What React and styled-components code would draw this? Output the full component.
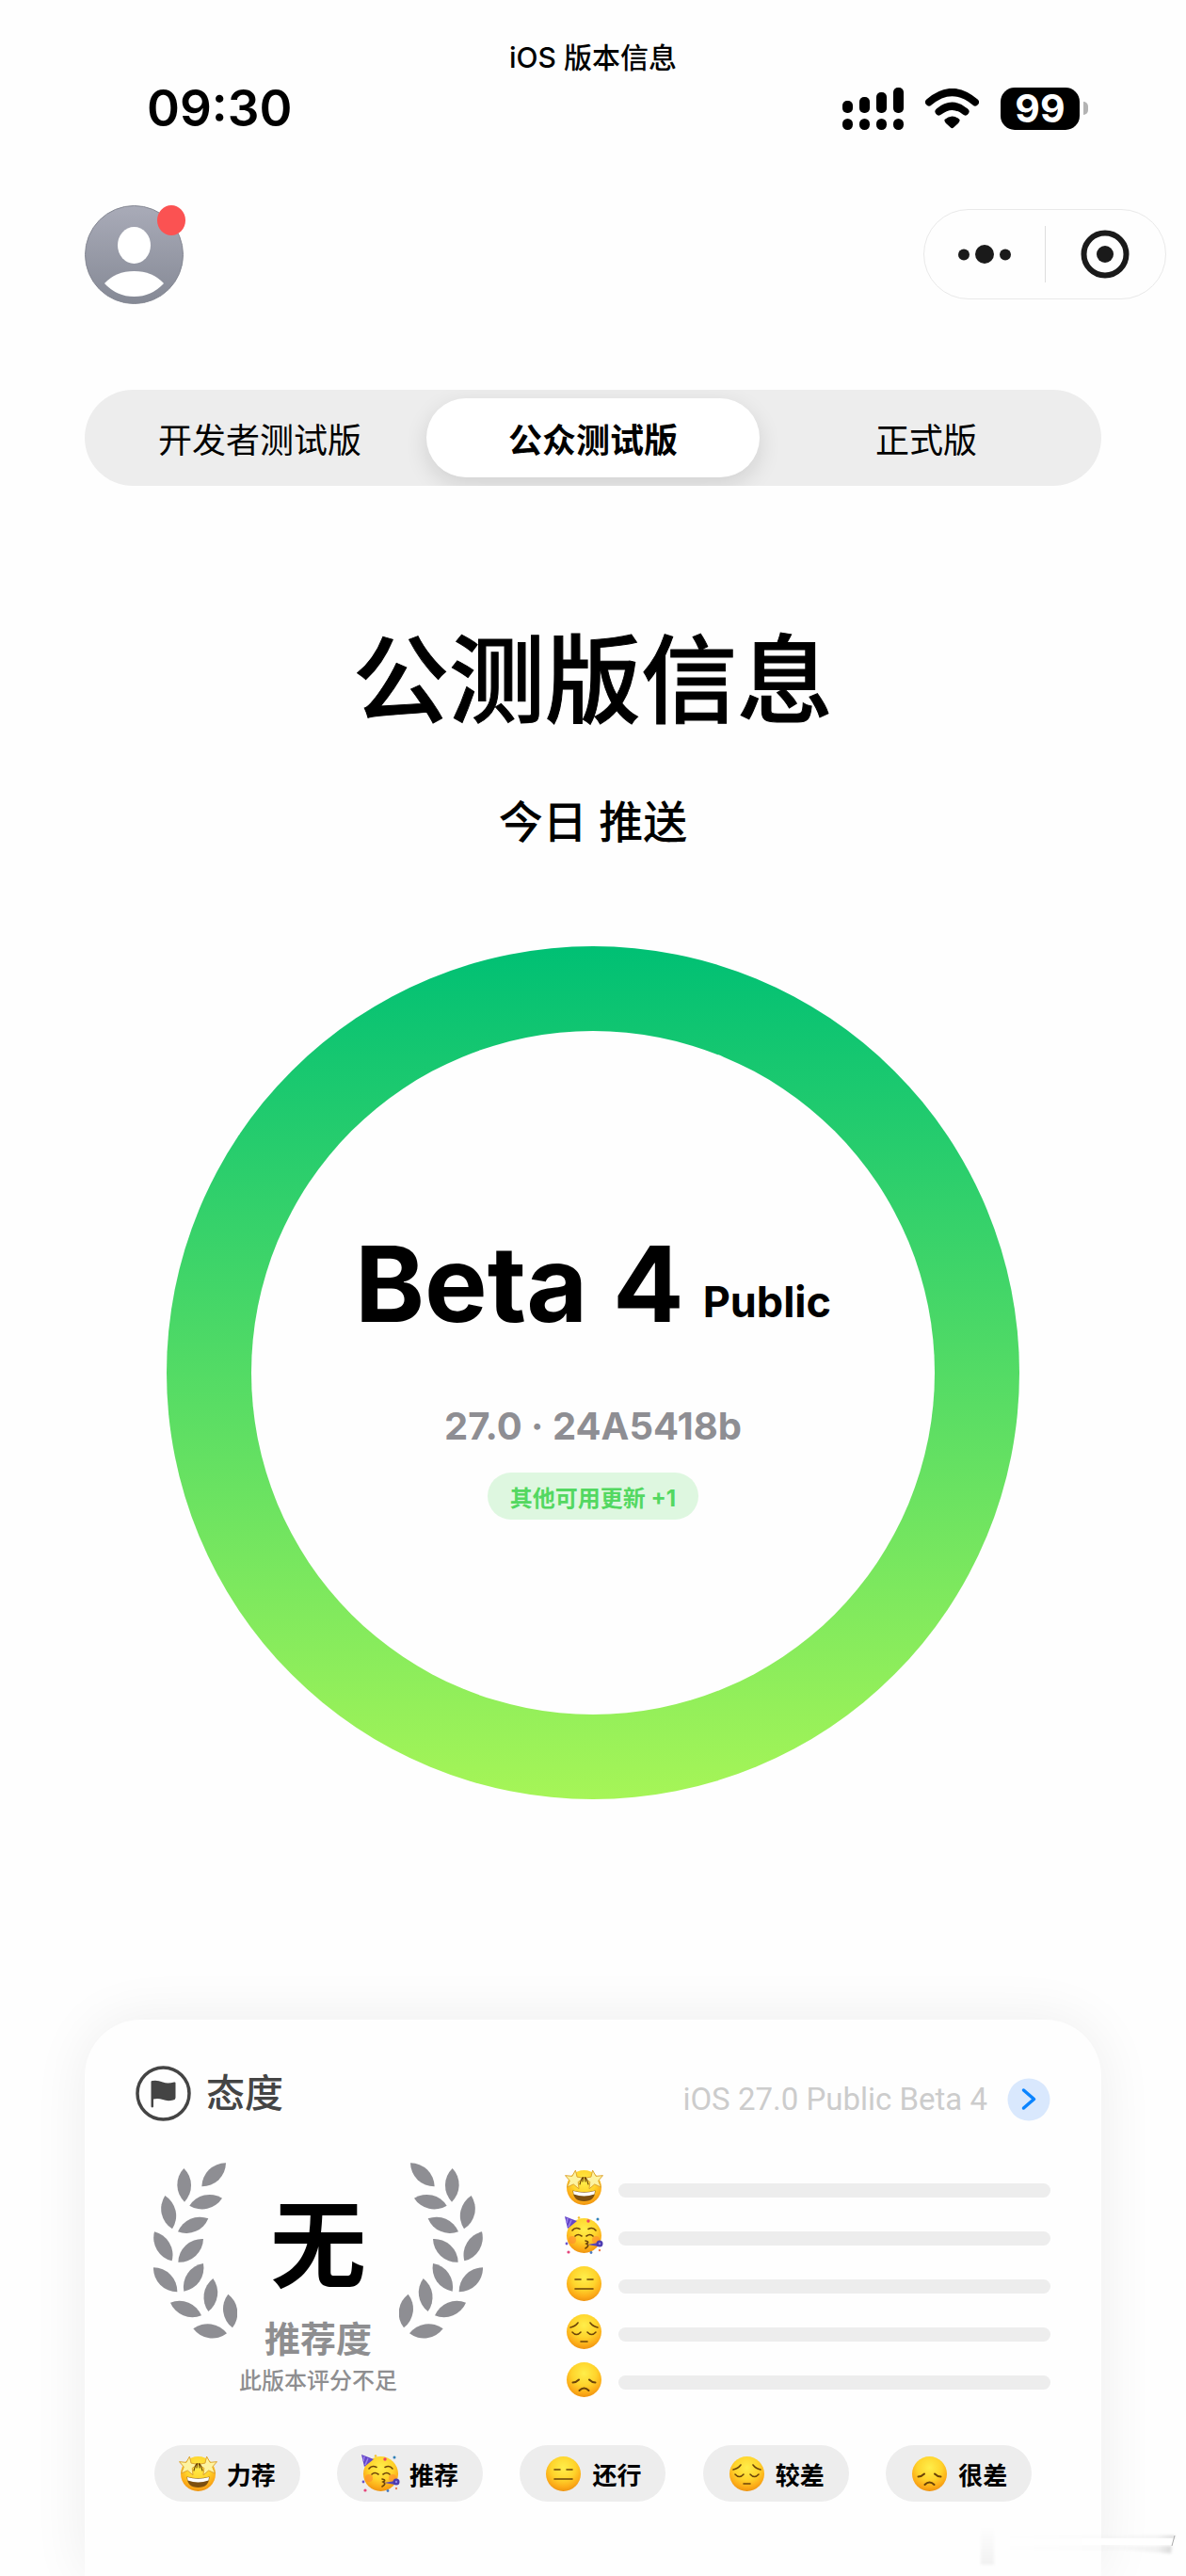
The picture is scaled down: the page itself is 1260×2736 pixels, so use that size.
import React, { useState } from 'react';
import styled, { createGlobalStyle } from 'styled-components';

const GlobalStyle = createGlobalStyle`
  * {
    box-sizing: border-box;
  }
  html, body, #root {
    height: 100%;
  }
  body {
    margin: 0;
    overflow: hidden;
    background: #fefefe;
    color: #000;
    font-family: Inter, "Noto Sans CJK SC", sans-serif;
  }
  button {
    font-family: inherit;
    color: inherit;
    border: 0;
    padding: 0;
    background: none;
    cursor: pointer;
  }
  h1, h2, p {
    margin: 0;
  }
`;

const Page = styled.div`
  position: relative;
  display: flex;
  flex-direction: column;
  height: 100%;
  overflow: hidden;
`;

const Title = styled.p`
  padding-top: 42px;
  text-align: center;
  font-size: 30px;
  line-height: 38px;
  font-weight: 500;
`;

const StatusBar = styled.div`
  display: flex;
  align-items: center;
  justify-content: space-between;
  height: 70px;
  padding: 0 104px 0 156px;
`;

const Clock = styled.span`
  font-size: 53px;
  line-height: 70px;
  font-weight: 600;
`;

const StatusIcons = styled.div`
  display: flex;
  align-items: center;
`;

const Wifi = styled.svg`
  margin: 0 23px;
`;

const Battery = styled.span`
  width: 84px;
  height: 45px;
  border-radius: 15px;
  background: #000;
  color: #fff;
  font-size: 41px;
  line-height: 45px;
  font-weight: 700;
  text-align: center;
`;

const BatteryTip = styled.span`
  width: 5px;
  height: 14px;
  margin-left: 4px;
  border-radius: 0 6px 6px 0;
  background: #b3b3b3;
`;

const NavBar = styled.header`
  display: flex;
  align-items: center;
  justify-content: space-between;
  height: 108px;
  margin-top: 66px;
  padding: 0 21px 0 90px;
`;

const Avatar = styled.button`
  position: relative;
  width: 105px;
  height: 105px;
`;

const Dot = styled.span`
  position: absolute;
  top: 0;
  right: -2px;
  width: 30px;
  height: 32px;
  border-radius: 50%;
  background: #fb5252;
`;

const Capsule = styled.div`
  display: flex;
  width: 258px;
  height: 96px;
  border: 1px solid #e9e9e9;
  border-radius: 48px;
`;

const CapsuleButton = styled.button`
  display: flex;
  flex: 1;
  align-items: center;
  justify-content: center;
`;

const Divider = styled.span`
  width: 1px;
  margin: 17px 0;
  background: #dedede;
`;

const Tabs = styled.nav`
  display: grid;
  grid-template-columns: repeat(3, 1fr);
  height: 102px;
  margin: 90px 90px 0;
  padding: 9px;
  border-radius: 51px;
  background: #ededed;
  overflow: hidden;
`;

const Tab = styled.button`
  border-radius: 42px;
  font-size: 36px;
  font-weight: ${props => (props.$active ? 700 : 400)};
  background: ${props => (props.$active ? '#fff' : 'transparent')};
  box-shadow: ${props => (props.$active ? '0 8px 24px rgba(0, 0, 0, 0.12)' : 'none')};
`;

const Heading = styled.h1`
  margin-top: 147px;
  text-align: center;
  font-size: 102px;
  line-height: 120px;
  font-weight: 500;
  -webkit-text-stroke: 1px;
`;

const Subheading = styled.p`
  margin-top: 55px;
  text-align: center;
  font-size: 47px;
  line-height: 70px;
  font-weight: 500;
`;

const Ring = styled.section`
  flex: none;
  align-self: center;
  width: 906px;
  height: 906px;
  margin-top: 97px;
  padding: 90px;
  border-radius: 50%;
  background: linear-gradient(#00c074, #53db65 50%, #a6f557);
`;

const RingInner = styled.div`
  display: flex;
  flex-direction: column;
  align-items: center;
  height: 100%;
  padding-top: 198px;
  border-radius: 50%;
  background: #fefefe;
`;

const Version = styled.h2`
  display: flex;
  align-items: flex-end;
  gap: 20px;
  font-size: 112px;
  line-height: 140px;
  font-weight: 700;
`;

const Channel = styled.span`
  font-size: 45px;
  line-height: 100px;
`;

const Build = styled.p`
  margin-top: 57px;
  color: #8e8e93;
  font-size: 40px;
  line-height: 50px;
  font-weight: 700;
`;

const More = styled.button`
  height: 50px;
  margin-top: 24px;
  padding: 0 24px;
  border-radius: 25px;
  background: #def7e0;
  && {
    color: #53d861;
  }
  font-size: 24px;
  font-weight: 700;
`;

const Card = styled.section`
  flex: 1 0 auto;
  margin: 234px 90px 0;
  padding: 48px 54px 0;
  border-radius: 60px 60px 0 0;
  background: #fefefe;
  box-shadow: 0 0 60px rgba(0, 0, 0, 0.07);
`;

const CardHead = styled.div`
  display: flex;
  align-items: flex-end;
  justify-content: space-between;
`;

const CardTitle = styled.h2`
  display: flex;
  align-items: center;
  gap: 16px;
  color: #444;
  font-size: 41px;
  line-height: 60px;
  font-weight: 500;
`;

const Target = styled.a`
  display: flex;
  align-items: center;
  gap: 21px;
  color: #ccc;
  font-family: Roboto, sans-serif;
  font-size: 33px;
  line-height: 46px;
  text-decoration: none;
`;

const CardBody = styled.div`
  display: flex;
  justify-content: space-between;
  margin-top: 44px;
  padding-left: 19px;
`;

const Score = styled.div`
  display: grid;
  grid-template-columns: 89px 1fr 89px;
  width: 350px;
`;

const Laurel = styled.svg`
  width: 89px;
  height: 187px;
  transform: ${props => (props.$flip ? 'scaleX(-1)' : 'none')};
`;

const ScoreText = styled.div`
  display: flex;
  flex-direction: column;
  align-items: center;
  color: #8e8e90;
  white-space: nowrap;
`;

const ScoreValue = styled.strong`
  margin-top: 28px;
  color: #000;
  font-size: 102px;
  line-height: 120px;
  font-weight: 700;
`;

const ScoreLabel = styled.span`
  margin-top: 14px;
  font-size: 38px;
  line-height: 50px;
  font-weight: 700;
`;

const ScoreNote = styled.span`
  margin-top: 2px;
  font-size: 24px;
  line-height: 36px;
  font-weight: 500;
`;

const Bars = styled.ul`
  display: flex;
  flex-direction: column;
  width: 516px;
  margin: 1px 0 0;
  padding: 0;
  list-style: none;
`;

const BarRow = styled.li`
  display: flex;
  align-items: center;
  gap: 16px;
  height: 51px;
`;

const Track = styled.span`
  flex: 1;
  height: 15px;
  margin-top: 6px;
  border-radius: 8px;
  background: #ededed;
`;

const Votes = styled.div`
  display: flex;
  justify-content: space-around;
  margin-top: 44px;
`;

const Vote = styled.button`
  display: flex;
  align-items: center;
  gap: 10px;
  height: 60px;
  padding: 0 26px;
  border-radius: 30px;
  background: #ededed;
  font-size: 26px;
  font-weight: 700;
`;

const Watermark = styled.svg`
  position: absolute;
  right: 0;
  bottom: 0;
  pointer-events: none;
`;

// each leaf goes from one tip to the other
const leaves = [
  [270, 81, 193, 156],
  [136, 98, 138, 205],
  [258, 193, 154, 217],
  [76, 185, 99, 291],
  [214, 258, 117, 300],
  [42, 300, 98, 393],
  [198, 323, 118, 397],
  [39, 414, 115, 492],
  [198, 401, 136, 490],
  [229, 449, 214, 554],
  [277, 499, 291, 606],
  [93, 526, 192, 567],
  [166, 609, 273, 624]
];

const LaurelBranch = ({ flip }) => (
  <Laurel $flip={flip} viewBox="39 80 267 561" aria-hidden="true">
    {leaves.map(([x1, y1, x2, y2]) => (
      <path
        key={`${x1}-${y1}`}
        fill="#8e8e93"
        d={`M${x1} ${y1}A76 76 0 0 1 ${x2} ${y2}A76 76 0 0 1 ${x1} ${y1}Z`}
      />
    ))}
  </Laurel>
);

const brown = { fill: 'none', stroke: '#6b4308', strokeWidth: 1.6, strokeLinecap: 'round' };

const faces = {
  star: (
    <>
      <path d="M8.500 23.500Q20.500 27 32.500 23.500Q32 35 20.500 35Q9 35 8.500 23.500Z" fill="#7d5010" />
      <path d="M9 24Q20.500 27.500 32 24L31.500 27.500Q20.500 31.500 9.500 27.500Z" fill="#fff" />
      {[10, 31].map(x => (
        <path
          key={x}
          transform={`translate(${x} 12) rotate(${x < 20 ? 8 : -8})`}
          d="M0 -10L2.600 -3.300L10 -3L4.500 1.800L6.300 9L0 5L-6.300 9L-4.500 1.800L-10 -3L-2.600 -3.300Z"
          fill="#fdf3a0"
          stroke="#dca22c"
          strokeWidth="0.9"
          strokeLinejoin="round"
        />
      ))}
      <path d="M16 17Q18 9.500 19.500 9.500L19 14M25 17Q23 9.500 21.500 9.500L22 14" {...brown} strokeWidth="1.2" />
    </>
  ),
  party: (
    <>
      <circle cx="8" cy="25" r="4" fill="#ff8a30" opacity="0.6" />
      <circle cx="33" cy="25" r="4" fill="#ff8a30" opacity="0.6" />
      <path d="M8 15Q11 11 16 13.500M25 13.500Q30 11 33 15M11 21Q14 18 18 21M23 21Q27 18 30 21M22 26Q27 27 23 29Q27 31 22 34" {...brown} />
      <path d="M0 0L13 5L3 13Z" fill="#6546c8" />
      <path d="M3 2L2 7M7 4L4 11" stroke="#9b83ee" strokeWidth="1.5" />
      <path d="M24 30L36 28V32Z" fill="#5947b5" />
      <circle cx="37" cy="29" r="3.500" fill="#4c3bb0" />
      <circle cx="37" cy="29" r="1.200" fill="#9485e8" />
      <circle cx="25" cy="5" r="1.700" fill="#ef4465" />
      <circle cx="35" cy="3" r="1.500" fill="#2f7fb8" />
      <circle cx="15" cy="1.500" r="1.300" fill="#f5c02b" />
      <circle cx="2" cy="29" r="1.400" fill="#6a55cc" />
      <circle cx="4" cy="38" r="1.600" fill="#e5457b" />
      <circle cx="28" cy="38.500" r="1.400" fill="#4b7abf" />
      <circle cx="37" cy="36" r="1.200" fill="#ef7b4d" />
    </>
  ),
  flat: <path d="M11 16H17M24 16H30M11 26H30" {...brown} />,
  pensive: <path d="M6 16Q11 15 14 11M27 11Q30 15 35 16M8 21Q12.500 26 17 21M24 21Q28.500 26 33 21M17 31H24" {...brown} />,
  sad: <path d="M8.500 23.500Q12 23.500 15 20.500M26 20.500Q29 23.500 32.500 23.500M15.500 32Q20.500 27 25.500 32" {...brown} strokeWidth="2" />
};

const Emoji = ({ name }) => (
  <svg width="41" height="41" viewBox="0 0 41 41" aria-hidden="true">
    <defs>
      <radialGradient id={`skin-${name}`} cx="0.5" cy="0.32" r="0.7">
        <stop offset="0" stopColor="#ffee4a" />
        <stop offset="0.5" stopColor="#ffd42c" />
        <stop offset="0.8" stopColor="#fcac18" />
        <stop offset="1" stopColor="#ec9010" />
      </radialGradient>
    </defs>
    <circle cx="20.500" cy="20.500" r="18.500" fill={`url(#skin-${name})`} />
    {faces[name]}
  </svg>
);

const ratings = [
  { name: 'star', label: '力荐' },
  { name: 'party', label: '推荐' },
  { name: 'flat', label: '还行' },
  { name: 'pensive', label: '较差' },
  { name: 'sad', label: '很差' }
];

const tabs = ['开发者测试版', '公众测试版', '正式版'];

const App = () => {
  const [active, setActive] = useState(1);

  return (
    <Page>
      <GlobalStyle />
      <Title>iOS 版本信息</Title>

      <StatusBar>
        <Clock>09:30</Clock>
        <StatusIcons>
          <svg width="65" height="45" viewBox="0 0 65 45" aria-hidden="true">
            {[14, 10, 5, 0].map((y, i) => (
              <g key={y}>
                <rect x={i * 18} y={y} width="11" height={27 - y} rx="5" />
                <rect x={i * 18} y="33" width="11" height="12" rx="5.500" />
              </g>
            ))}
          </svg>
          <Wifi width="57" height="43" viewBox="0 0 57 43" aria-hidden="true">
            <path d="M4 14.500Q28.500 -6.500 53 14.500M14.500 24.500Q28.500 13 42.500 24.500" fill="none" stroke="#000" strokeWidth="8" strokeLinecap="round" />
            <path d="M20.500 33Q28.500 26 36.500 33Q37 35 35 37L30 41.500Q28.500 43 27 41.500L22 37Q20 35 20.500 33Z" />
          </Wifi>
          <Battery>99</Battery>
          <BatteryTip />
        </StatusIcons>
      </StatusBar>

      <NavBar>
        <Avatar aria-label="account">
          <svg width="105" height="105" viewBox="0 0 105 105" aria-hidden="true">
            <defs>
              <linearGradient id="avatar" x1="0" y1="0" x2="0" y2="1">
                <stop offset="0" stopColor="#a9abb8" />
                <stop offset="1" stopColor="#858995" />
              </linearGradient>
            </defs>
            <circle cx="52.500" cy="52.500" r="52" fill="url(#avatar)" stroke="#858893" />
            <ellipse cx="52.500" cy="42.500" rx="17.500" ry="19.500" fill="#fff" />
            <path d="M21 83Q33 70 52.500 70Q72 70 84 83Q71 97 52.500 97Q34 97 21 83Z" fill="#fff" />
          </svg>
          <Dot />
        </Avatar>
        <Capsule>
          <CapsuleButton aria-label="more">
            <svg width="56" height="20" viewBox="0 0 56 20" fill="#1a1a1a">
              <circle cx="6" cy="10.500" r="6" />
              <circle cx="28" cy="10" r="10" />
              <circle cx="50" cy="10.500" r="6" />
            </svg>
          </CapsuleButton>
          <Divider />
          <CapsuleButton aria-label="close">
            <svg width="52" height="52" viewBox="0 0 52 52">
              <circle cx="26" cy="26" r="22.500" fill="none" stroke="#1a1a1a" strokeWidth="6" />
              <circle cx="26" cy="26" r="9" fill="#1a1a1a" />
            </svg>
          </CapsuleButton>
        </Capsule>
      </NavBar>

      <Tabs>
        {tabs.map((tab, i) => (
          <Tab key={tab} $active={i === active} onClick={() => setActive(i)}>{tab}</Tab>
        ))}
      </Tabs>

      <Heading>公测版信息</Heading>
      <Subheading>今日 推送</Subheading>

      <Ring>
        <RingInner>
          <Version>Beta 4 <Channel>Public</Channel></Version>
          <Build>27.0 · 24A5418b</Build>
          <More>其他可用更新 +1</More>
        </RingInner>
      </Ring>

      <Card>
        <CardHead>
          <CardTitle>
            <svg width="59" height="59" viewBox="0 0 59 59" aria-hidden="true">
              <circle cx="29.500" cy="29.500" r="27.500" fill="none" stroke="#444" strokeWidth="3.500" />
              <path d="M16.500 17Q16.500 16 18 16Q23 15 29 17.500Q34 19.500 41 17.500Q42.500 17 42.500 18.500V34Q42.500 36 40 36.500Q34 38 29 36Q24 34.500 19 35.500V43.500Q18 45.500 16.500 43.500Z" fill="#444" />
            </svg>
            态度
          </CardTitle>
          <Target href="#beta">
            iOS 27.0 Public Beta 4
            <svg width="46" height="46" viewBox="0 0 46 46" aria-hidden="true">
              <circle cx="23" cy="23" r="22.500" fill="#d9e8fd" />
              <path d="M17.500 13L28.500 22.500L17.500 32" fill="none" stroke="#0a84ff" strokeWidth="3.500" strokeLinecap="round" strokeLinejoin="round" />
            </svg>
          </Target>
        </CardHead>

        <CardBody>
          <Score>
            <LaurelBranch />
            <ScoreText>
              <ScoreValue>无</ScoreValue>
              <ScoreLabel>推荐度</ScoreLabel>
              <ScoreNote>此版本评分不足</ScoreNote>
            </ScoreText>
            <LaurelBranch flip />
          </Score>
          <Bars>
            {ratings.map(({ name }) => (
              <BarRow key={name}>
                <Emoji name={name} />
                <Track />
              </BarRow>
            ))}
          </Bars>
        </CardBody>

        <Votes>
          {ratings.map(({ name, label }) => (
            <Vote key={name}>
              <Emoji name={name} />
              {label}
            </Vote>
          ))}
        </Votes>
      </Card>

      <Watermark width="230" height="60" viewBox="0 0 230 60" aria-hidden="true">
        <defs>
          <linearGradient id="stem" x1="0" y1="0" x2="0" y2="1">
            <stop offset="0" stopColor="#000" stopOpacity="0" />
            <stop offset="1" stopColor="#000" stopOpacity="0.05" />
          </linearGradient>
          <linearGradient id="line" x1="0" y1="0" x2="1" y2="0">
            <stop offset="0" stopColor="#000" stopOpacity="0" />
            <stop offset="0.7" stopColor="#000" stopOpacity="0.02" />
            <stop offset="0.9" stopColor="#000" stopOpacity="0.05" />
            <stop offset="1" stopColor="#000" stopOpacity="0.16" />
          </linearGradient>
          <filter id="soft" x="-20%" y="-50%" width="140%" height="200%">
            <feGaussianBlur stdDeviation="1.5" />
          </filter>
        </defs>
        <rect x="12" y="7" width="14" height="41" fill="url(#stem)" filter="url(#soft)" />
        <path d="M30 17H218V20H30ZM30 28H215L214 36L160 32H30Z" fill="url(#line)" filter="url(#soft)" />
        <path d="M120 20H217L214 27H120Z" fill="#fff" />
        <path d="M218 17L215 28" stroke="#aaa" strokeWidth="1" />
      </Watermark>
    </Page>
  );
};

export default App;
